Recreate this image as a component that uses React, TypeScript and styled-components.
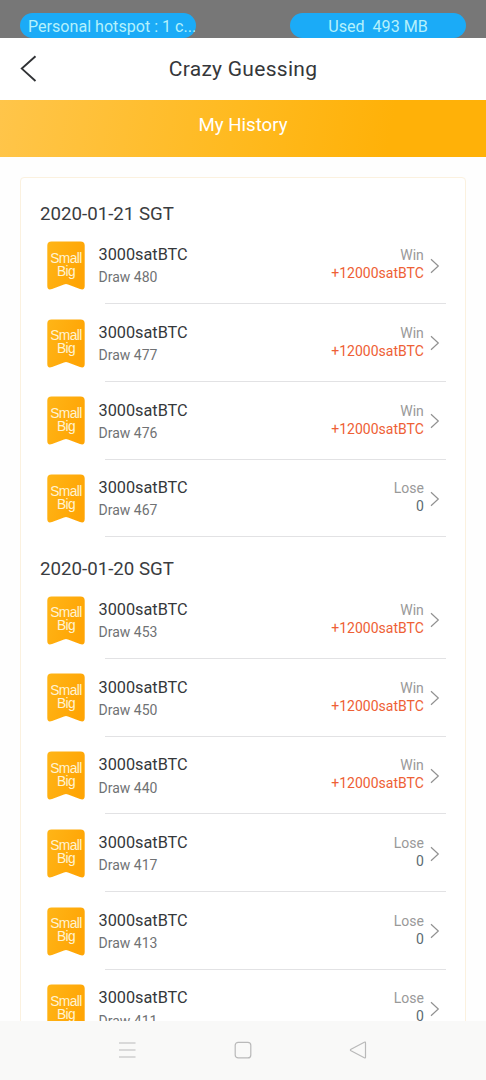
import React from "react";
import styled, { createGlobalStyle } from "styled-components";

const GlobalStyle = createGlobalStyle`
  * { box-sizing: border-box; }
  body { margin: 0; background: #fff; font-family: Roboto, "Liberation Sans", sans-serif; }
`;

const Screen = styled.div`
  width: 100%;
  max-width: 486px;
  height: 1080px;
  display: flex;
  flex-direction: column;
  overflow: hidden;
  background: #fefefe;
`;

const StatusBar = styled.div`
  height: 38px;
  flex: none;
  display: flex;
  justify-content: space-between;
  align-items: flex-end;
  padding: 0 20px;
  background: #777;
`;

const Pill = styled.div<{ $align: "left" | "center" }>`
  width: 176px;
  height: 25px;
  padding-left: ${(p) => (p.$align === "left" ? "8px" : "0")};
  border-radius: 12.5px;
  background: #1babf7;
  color: #b4f1fc;
  font-size: 16.1px;
  line-height: 27px;
  text-align: ${(p) => p.$align};
  white-space: pre;
`;

const TitleBar = styled.header`
  height: 61.5px;
  flex: none;
  display: grid;
  grid-template-columns: 60px 1fr 60px;
  align-items: center;
  background: #fff;
`;

const BackIcon = styled.svg`
  width: 18px;
  height: 30px;
  margin-left: 20px;
`;

const Title = styled.h1`
  margin: 0;
  font-size: 21px;
  font-weight: 400;
  letter-spacing: 0.28px;
  text-align: center;
  color: #35373a;
`;

const Banner = styled.div`
  height: 57px;
  flex: none;
  background: linear-gradient(100deg, #ffc54a 0%, #ffba20 48%, #ffb108 80%);
  color: #fff;
  font-size: 18.7px;
  line-height: 51px;
  text-align: center;
`;

const Content = styled.main`
  flex: 1;
  min-height: 0;
  overflow: hidden;
  padding: 20.5px 20px 0;
`;

const Card = styled.section`
  border: 1.5px solid #fbf1df;
  border-radius: 4px;
  padding: 4.5px 19px 20px;
  background: #fff;
`;

const DateHeading = styled.h2`
  margin: 0;
  height: 44px;
  padding-top: 9.6px;
  font-size: 18.7px;
  line-height: 44px;
  font-weight: 400;
  color: #3a3c40;
`;

const Row = styled.div`
  height: 77.7px;
  display: flex;
  padding-left: 7px;
`;

const Badge = styled.div`
  width: 38px;
  height: 49px;
  margin-top: 14.5px;
  flex: none;
  display: grid;
`;

const Ribbon = styled.svg`
  grid-area: 1 / 1;
  width: 38px;
  height: 49px;
`;

const BadgeText = styled.div`
  grid-area: 1 / 1;
  padding-top: 10.5px;
  font-family: "Liberation Sans", Arial, sans-serif;
  font-size: 13.8px;
  line-height: 13px;
  letter-spacing: -0.6px;
  text-align: center;
  color: #fff3d2;
`;

const Entry = styled.div`
  flex: 1;
  margin-left: 13.5px;
  padding-top: 17.7px;
`;

const Amount = styled.div`
  font-size: 16.3px;
  line-height: 21px;
  color: #35383b;
`;

const Draw = styled.div`
  margin-top: 2.2px;
  font-size: 14px;
  line-height: 20px;
  color: #707274;
`;

const Result = styled.div`
  padding-top: 19.7px;
  text-align: right;
`;

const Outcome = styled.div`
  font-size: 14px;
  line-height: 18px;
  color: #999;
`;

const Payout = styled.div<{ $won: boolean }>`
  font-size: 14px;
  line-height: 18px;
  color: ${(p) => (p.$won ? "#ee6035" : "#5c6c72")};
`;

const Chevron = styled.svg`
  width: 10px;
  height: 16px;
  margin: 31.2px 6px 0 6.2px;
  flex: none;
`;

const Divider = styled.div`
  height: 1px;
  margin: -1px 0 0 64.5px;
  background: #e2e2e4;
`;

const NavBar = styled.nav`
  height: 59.5px;
  flex: none;
  display: flex;
  justify-content: center;
  align-items: center;
  gap: 97px;
  background: #f9f9f8;
`;

const NavIcon = styled.svg`
  width: 18.5px;
  height: 20px;
  fill: none;
  stroke: #b9b9b9;
  stroke-width: 1.2;
`;

type Bet = { draw: number; won: boolean };

const history: { date: string; bets: Bet[] }[] = [
  {
    date: "2020-01-21 SGT",
    bets: [
      { draw: 480, won: true },
      { draw: 477, won: true },
      { draw: 476, won: true },
      { draw: 467, won: false },
    ],
  },
  {
    date: "2020-01-20 SGT",
    bets: [
      { draw: 453, won: true },
      { draw: 450, won: true },
      { draw: 440, won: true },
      { draw: 417, won: false },
      { draw: 413, won: false },
      { draw: 411, won: false },
    ],
  },
];

function BetRow({ draw, won }: Bet) {
  return (
    <>
      <Row>
        <Badge>
          <Ribbon viewBox="0 0 38 49">
            <defs>
              <linearGradient id={`ribbon-${draw}`} x1="0" y1="0" x2="1" y2="0.4">
                <stop offset="0" stopColor="#ffb517" />
                <stop offset="1" stopColor="#ffa505" />
              </linearGradient>
            </defs>
            <path
              d="M4.5 .5H33.5Q37.7 .5 37.7 4.5V45Q37.7 49.6 33 48L21 43.4Q19 42.6 17 43.4L5 48Q.3 49.6 .3 45V4.5Q.3 .5 4.5 .5Z"
              fill={`url(#ribbon-${draw})`}
            />
          </Ribbon>
          <BadgeText>
            Small
            <br />
            Big
          </BadgeText>
        </Badge>
        <Entry>
          <Amount>3000satBTC</Amount>
          <Draw>Draw {draw}</Draw>
        </Entry>
        <Result>
          <Outcome>{won ? "Win" : "Lose"}</Outcome>
          <Payout $won={won}>{won ? "+12000satBTC" : "0"}</Payout>
        </Result>
        <Chevron viewBox="0 0 10 16">
          <path d="M1 1.2L8.3 8L1 14.8" fill="none" stroke="#919191" strokeWidth="1.2" />
        </Chevron>
      </Row>
      <Divider />
    </>
  );
}

export default function App() {
  return (
    <Screen>
      <GlobalStyle />
      <StatusBar>
        <Pill $align="left">Personal hotspot : 1 c...</Pill>
        <Pill $align="center">{"Used  493 MB"}</Pill>
      </StatusBar>
      <TitleBar>
        <BackIcon viewBox="0 0 18 30">
          <path d="M15.5 2.2L1.8 14.6L15.5 27" fill="none" stroke="#303235" strokeWidth="1.9" />
        </BackIcon>
        <Title>Crazy Guessing</Title>
      </TitleBar>
      <Banner>My History</Banner>
      <Content>
        <Card>
          {history.map((day) => (
            <React.Fragment key={day.date}>
              <DateHeading>{day.date}</DateHeading>
              {day.bets.map((bet) => (
                <BetRow key={bet.draw} {...bet} />
              ))}
            </React.Fragment>
          ))}
        </Card>
      </Content>
      <NavBar>
        <NavIcon viewBox="0 0 18.5 20">
          <path d="M1 3H17.5M1 10H17.5M1 17H17.5" />
        </NavIcon>
        <NavIcon viewBox="0 0 18.5 20">
          <rect x="1.2" y="2.3" width="15.6" height="15.6" rx="3" />
        </NavIcon>
        <NavIcon viewBox="0 0 18.5 20">
          <path d="M16.5 3V17.2Q16.5 18.4 15.3 17.8L2 10.8Q.8 10 2 9.2L15.3 2.2Q16.5 1.6 16.5 3Z" />
        </NavIcon>
      </NavBar>
    </Screen>
  );
}
